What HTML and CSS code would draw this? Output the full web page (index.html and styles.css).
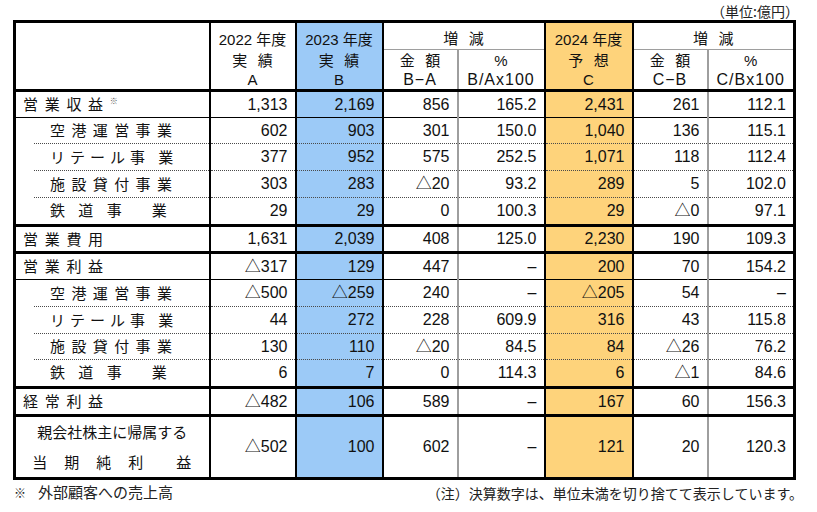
FILE: index.html
```html
<!DOCTYPE html>
<html lang="ja">
<head>
<meta charset="utf-8">
<title>業績予想</title>
<link rel="stylesheet" href="styles.css">
</head>
<body>
<div class="page">
  <div class="unit">（単位:億円）</div>
  <table class="fin">
    <colgroup>
      <col class="w-label"><col class="w-a"><col class="w-b"><col class="w-ba"><col class="w-bp"><col class="w-c"><col class="w-cb"><col class="w-cp">
    </colgroup>
    <thead>
      <tr class="h1">
        <th rowspan="2" class="label"></th>
        <th class="a">2022 年度</th>
        <th class="b">2023 年度</th>
        <th colspan="2" class="diff"><span class="jp">増 減</span></th>
        <th class="c">2024 年度</th>
        <th colspan="2" class="diff last-col"><span class="jp">増 減</span></th>
      </tr>
      <tr class="h2">
        <th class="a"><span class="jp">実 績</span><br>A</th>
        <th class="b"><span class="jp">実 績</span><br>B</th>
        <th class="ba"><span class="jp">金 額</span><br><span class="f">B−A</span></th>
        <th class="bp">%<br><span class="f">B/Ax100</span></th>
        <th class="c"><span class="jp">予 想</span><br>C</th>
        <th class="cb"><span class="jp">金 額</span><br><span class="f">C−B</span></th>
        <th class="cp">%<br><span class="f">C/Bx100</span></th>
      </tr>
    </thead>
    <tbody>
      <tr class="main">
        <td class="label"><span class="main-label">営業収益</span><sup class="mark">※</sup></td>
        <td class="a num">1,313</td><td class="b num">2,169</td><td class="ba num">856</td><td class="bp num">165.2</td><td class="c num">2,431</td><td class="cb num">261</td><td class="cp num">112.1</td>
      </tr>
      <tr class="sub tight">
        <td class="label"><span class="sub-label wide">空港運営事業</span></td>
        <td class="a num">602</td><td class="b num">903</td><td class="ba num">301</td><td class="bp num">150.0</td><td class="c num">1,040</td><td class="cb num">136</td><td class="cp num">115.1</td>
      </tr>
      <tr class="sub">
        <td class="label"><span class="sub-label">リテール事&nbsp;業</span></td>
        <td class="a num">377</td><td class="b num">952</td><td class="ba num">575</td><td class="bp num">252.5</td><td class="c num">1,071</td><td class="cb num">118</td><td class="cp num">112.4</td>
      </tr>
      <tr class="sub">
        <td class="label"><span class="sub-label wide">施設貸付事業</span></td>
        <td class="a num">303</td><td class="b num">283</td><td class="ba num">△20</td><td class="bp num">93.2</td><td class="c num">289</td><td class="cb num">5</td><td class="cp num">102.0</td>
      </tr>
      <tr class="sub end">
        <td class="label"><span class="sub-label">鉄&nbsp;道&nbsp;事&nbsp;&nbsp;&nbsp;業</span></td>
        <td class="a num">29</td><td class="b num">29</td><td class="ba num">0</td><td class="bp num">100.3</td><td class="c num">29</td><td class="cb num">△0</td><td class="cp num">97.1</td>
      </tr>
      <tr class="main sep tight">
        <td class="label"><span class="main-label">営業費用</span></td>
        <td class="a num">1,631</td><td class="b num">2,039</td><td class="ba num">408</td><td class="bp num">125.0</td><td class="c num">2,230</td><td class="cb num">190</td><td class="cp num">109.3</td>
      </tr>
      <tr class="main sep">
        <td class="label"><span class="main-label">営業利益</span></td>
        <td class="a num">△317</td><td class="b num">129</td><td class="ba num">447</td><td class="bp num">–</td><td class="c num">200</td><td class="cb num">70</td><td class="cp num">154.2</td>
      </tr>
      <tr class="sub">
        <td class="label"><span class="sub-label wide">空港運営事業</span></td>
        <td class="a num">△500</td><td class="b num">△259</td><td class="ba num">240</td><td class="bp num">–</td><td class="c num">△205</td><td class="cb num">54</td><td class="cp num">–</td>
      </tr>
      <tr class="sub">
        <td class="label"><span class="sub-label">リテール事&nbsp;業</span></td>
        <td class="a num">44</td><td class="b num">272</td><td class="ba num">228</td><td class="bp num">609.9</td><td class="c num">316</td><td class="cb num">43</td><td class="cp num">115.8</td>
      </tr>
      <tr class="sub tight">
        <td class="label"><span class="sub-label wide">施設貸付事業</span></td>
        <td class="a num">130</td><td class="b num">110</td><td class="ba num">△20</td><td class="bp num">84.5</td><td class="c num">84</td><td class="cb num">△26</td><td class="cp num">76.2</td>
      </tr>
      <tr class="sub end">
        <td class="label"><span class="sub-label">鉄&nbsp;道&nbsp;事&nbsp;&nbsp;&nbsp;業</span></td>
        <td class="a num">6</td><td class="b num">7</td><td class="ba num">0</td><td class="bp num">114.3</td><td class="c num">6</td><td class="cb num">△1</td><td class="cp num">84.6</td>
      </tr>
      <tr class="main sep">
        <td class="label"><span class="main-label">経常利益</span></td>
        <td class="a num">△482</td><td class="b num">106</td><td class="ba num">589</td><td class="bp num">–</td><td class="c num">167</td><td class="cb num">60</td><td class="cp num">156.3</td>
      </tr>
      <tr class="total sep">
        <td class="label">
          <div class="total-line">親会社株主に帰属する</div>
          <div class="total-line spaced">当　期　純　利　　益</div>
        </td>
        <td class="a num">△502</td><td class="b num">100</td><td class="ba num">602</td><td class="bp num">–</td><td class="c num">121</td><td class="cb num">20</td><td class="cp num">120.3</td>
      </tr>
    </tbody>
  </table>
  <div class="notes">
    <span class="note-left"><span class="note-mark">※</span>外部顧客への売上高</span>
    <span class="note-right">（注）決算数字は、単位未満を切り捨てて表示しています。</span>
  </div>
</div>
</body>
</html>
```

FILE: styles.css
```css
body {
  margin: 0;
  background: #ffffff;
  color: #111111;
  font-family: "Liberation Sans", "Noto Sans CJK JP", sans-serif;
}

.page {
  width: 817px;
  box-sizing: border-box;
  padding: 0 14px 0 13px;
}

.unit {
  height: 20px;
  box-sizing: border-box;
  padding: 3px 4px 0 0;
  text-align: right;
  font-family: "Noto Sans CJK JP", sans-serif;
  font-size: 14px;
  line-height: 17px;
  color: #222222;
}

.fin {
  width: 783px;
  table-layout: fixed;
  border-collapse: collapse;
  border: 3px solid #000000;
  font-size: 16px;
}

.w-label { width: 195px; }
.w-a { width: 86px; }
.w-b { width: 87px; }
.w-ba { width: 75px; }
.w-bp { width: 87px; }
.w-c { width: 88px; }
.w-cb { width: 75px; }
.w-cp { width: 87px; }

.fin th,
.fin td {
  padding: 0;
  font-weight: normal;
  white-space: nowrap;
}

/* vertical rules */
.label { border-right: 2px solid #000000; }
.a { border-right: 2px solid #000000; }
.b { border-right: 2px solid #000000; background: #9ccaf7; }
.ba { border-right: 2px solid #9e9e9e; }
.bp { border-right: 2px solid #000000; }
.c { border-right: 2px solid #000000; background: #fed37b; }
.cb { border-right: 2px solid #9e9e9e; }
.diff { border-right: 2px solid #000000; }

/* header */
.fin thead th {
  text-align: center;
  line-height: 19px;
}

.h1 th {
  height: 25px;
  vertical-align: bottom;
  padding-bottom: 1px;
  font-size: 15px;
}

.h1 .diff { border-bottom: 1px solid #9e9e9e; }

.h1 .label,
.h2 th {
  border-bottom: 3px solid #000000;
}

.h2 th {
  height: 38px;
  vertical-align: middle;
  font-size: 15px;
}

.jp {
  font-family: "Noto Sans CJK JP", sans-serif;
  word-spacing: 7px;
}

.f {
  font-size: 16px;
  letter-spacing: 1px;
}

/* body rows */
.fin tbody td {
  vertical-align: middle;
  line-height: 20px;
}

.fin tbody .main td { height: 25px; }
.fin tbody .sub td { height: 26px; }
.fin tbody .sub.tight td { height: 25px; }
.fin tbody .main.tight td { height: 24px; }
.fin tbody .total td { height: 59px; }

.num {
  text-align: right;
  padding-right: 7px !important;
}

.main td { border-bottom: 1px solid #000000; }
.sub td { border-bottom: 1px dotted #4a4a4a; }
.sub .label { border-bottom: 0 none; }

.sub:not(.end) .label {
  background: repeating-linear-gradient(to right, #4a4a4a 0 1px, transparent 1px 2px) right bottom / calc(100% - 18px) 1px no-repeat;
}

.sep td { border-top: 3px solid #000000; }

.main-label {
  display: inline-block;
  padding-left: 7px;
  letter-spacing: 6.7px;
  font-size: 15px;
  font-family: "Noto Sans CJK JP", sans-serif;
}

.mark {
  font-family: "Noto Sans CJK JP", sans-serif;
  font-size: 8px;
  color: #555555;
  vertical-align: 6px;
  line-height: 0;
}

.sub-label {
  display: inline-block;
  padding-left: 34px;
  letter-spacing: 5px;
  font-size: 15px;
  font-family: "Noto Sans CJK JP", sans-serif;
}

.sub-label.wide { letter-spacing: 6.4px; }

.total .label {
  text-align: center;
  font-size: 15px;
  font-family: "Noto Sans CJK JP", sans-serif;
}

.total-line {
  line-height: 30px;
}

.total-line.spaced {
  letter-spacing: 1px;
}

/* notes */
.notes {
  display: flex;
  justify-content: space-between;
  align-items: center;
  margin-top: 2px;
  font-family: "Noto Sans CJK JP", sans-serif;
  color: #222222;
}

.note-left {
  font-size: 15px;
  line-height: 20px;
  padding-left: 1px;
}

.note-mark {
  font-size: 12px;
  margin-right: 12px;
}

.note-right {
  font-size: 14px;
  line-height: 20px;
}
```
